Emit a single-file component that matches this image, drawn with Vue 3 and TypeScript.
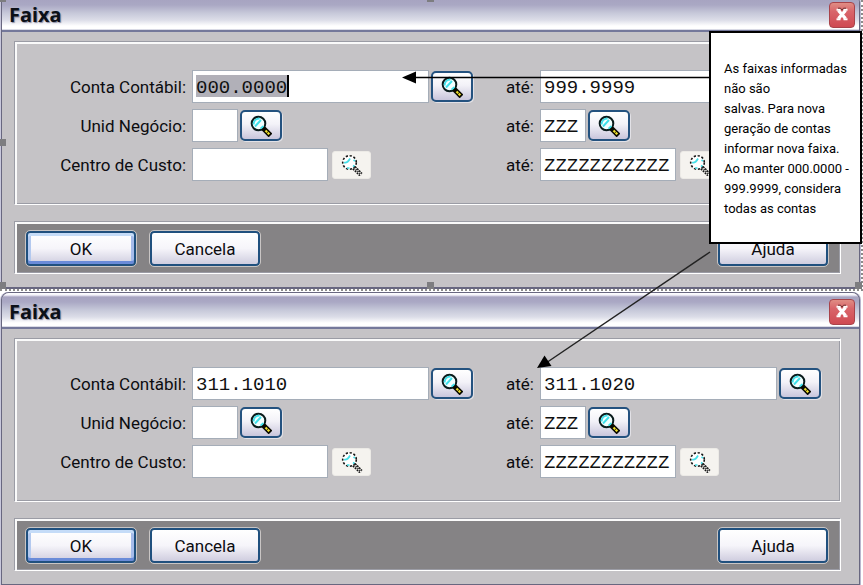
<script setup lang="ts">
import { reactive } from 'vue'

type Size = 'large' | 'small' | 'medium'

interface RangeRow {
  key: string
  label: string
  size: Size
  locked: boolean
  from: string
  to: string
  selected?: boolean
}

interface RangeDialog {
  id: string
  rows: RangeRow[]
}

function buildRows(from: string, to: string, selected: boolean): RangeRow[] {
  return [
    { key: 'conta', label: 'Conta Contábil:', size: 'large', locked: false, from, to, selected },
    { key: 'unid', label: 'Unid Negócio:', size: 'small', locked: false, from: '', to: 'ZZZ' },
    { key: 'centro', label: 'Centro de Custo:', size: 'medium', locked: true, from: '', to: 'ZZZZZZZZZZZ' },
  ]
}

const dialogs = reactive<RangeDialog[]>([
  { id: 'padrao', rows: buildRows('000.0000', '999.9999', true) },
  { id: 'nova', rows: buildRows('311.1010', '311.1020', false) },
])
</script>

<template>
  <main class="page">
    <svg class="symbols" width="0" height="0" aria-hidden="true">
      <symbol id="lens" viewBox="0 0 22 22">
        <circle cx="8.500" cy="8.500" r="6.800" fill="#f2ffff" stroke="#0a1c1c" stroke-width="2" />
        <path d="M3.600 9.500c0-3.500 2.500-6 6-6M5 11.500l6-6.500M10.500 13.300c1.500-.4 2.300-1.200 2.800-2.300" fill="none" stroke="#3fe0ea" stroke-width="1.900" />
        <path d="M13 13l7.500 7.500" stroke="#0a0a00" stroke-width="5.200" />
        <path d="M15.500 15.500l4 4" stroke="#efdf2c" stroke-width="2.200" stroke-dasharray="2.400 0.600" />
      </symbol>
      <symbol id="lens-off" viewBox="0 0 22 22">
        <circle cx="8.500" cy="8.500" r="6.800" fill="#fff" stroke="#161616" stroke-width="1.600" stroke-dasharray="2.200 1.800" />
        <path d="M3 8.500c2 .5 4.500-1 6-4M12.500 6l1.500 1M6 14h2.500M12 11.500l1.500 1" fill="none" stroke="#45dfe8" stroke-width="1.700" />
        <path d="M14 12.500l7 7M11.800 14.700l7 7" stroke="#161616" stroke-width="1.500" stroke-dasharray="2 .8" />
        <path d="M12.800 13.500l7.500 7.500" stroke="#2a2a2a" stroke-width="1.800" stroke-dasharray="1.300 1.300" />
      </symbol>
    </svg>

    <section v-for="dialog in dialogs" :key="dialog.id" class="dialog">
      <header class="titlebar">
        <h2 class="title">Faixa</h2>
        <button type="button" class="close" aria-label="Fechar">
          <svg viewBox="0 0 16 16" width="16" height="16" aria-hidden="true">
            <path d="M4.500 3.500l7 8M11.500 3.500l-7 8" stroke="#fff" stroke-width="3.400" />
            <path d="M2.500 2.800h4M9.500 2.800h4M2.500 12.200h4M9.500 12.200h4" stroke="#fff" stroke-width="2" />
            <path d="M4 1.200h2.500L8 3.200l1.500-2H12" fill="none" stroke="#6d3130" stroke-width="1" />
          </svg>
        </button>
      </header>

      <div class="body">
        <form class="group" @submit.prevent>
          <template v-for="row in dialog.rows" :key="row.key">
            <label class="label" :for="`${dialog.id}-${row.key}-de`">{{ row.label }}</label>
            <div class="cell">
              <input
                :id="`${dialog.id}-${row.key}-de`"
                v-model="row.from"
                type="text"
                class="field"
                :class="[row.size, { selected: row.selected }]"
              />
              <button type="button" class="lookup" :disabled="row.locked" aria-label="Pesquisar">
                <svg width="22" height="22" aria-hidden="true">
                  <use :href="row.locked ? '#lens-off' : '#lens'" />
                </svg>
              </button>
            </div>
            <label class="label" :for="`${dialog.id}-${row.key}-ate`">até:</label>
            <div class="cell">
              <input
                :id="`${dialog.id}-${row.key}-ate`"
                v-model="row.to"
                type="text"
                class="field"
                :class="row.size"
              />
              <button type="button" class="lookup" :disabled="row.locked" aria-label="Pesquisar">
                <svg width="22" height="22" aria-hidden="true">
                  <use :href="row.locked ? '#lens-off' : '#lens'" />
                </svg>
              </button>
            </div>
          </template>
        </form>

        <footer class="actions">
          <button type="button" class="action primary">OK</button>
          <button type="button" class="action">Cancela</button>
          <button type="button" class="action help">Ajuda</button>
        </footer>
      </div>
    </section>

    <!-- Selection frame round the first dialog -->
    <div class="frame" aria-hidden="true">
      <i class="handle top left"></i>
      <i class="handle top center"></i>
      <i class="handle middle left"></i>
      <i class="handle bottom left"></i>
      <i class="handle bottom center"></i>
      <i class="handle bottom right"></i>
    </div>

    <svg class="arrows" viewBox="0 0 320 310" width="320" height="310" aria-hidden="true">
      <path d="M12 17.500H310" stroke="#000" stroke-width="1.500" />
      <path d="M0 17.500L14 11.500V23.500Z" />
      <path d="M308 192L144 303" stroke="#222" stroke-width="1.500" />
      <path d="M135 308L142.500 295.500L149.500 306Z" />
    </svg>

    <aside class="note">
      As faixas informadas não são<br />
      salvas. Para nova geração de contas informar nova faixa. Ao manter 000.0000 - 999.9999, considera
      todas as contas
    </aside>
  </main>
</template>

<style>
body {
  margin: 0;
  background: #fff;
}
</style>

<style scoped>
.page {
  position: relative;
  display: flex;
  flex-direction: column;
  gap: 3px;
  overflow: hidden;
  font-family: Roboto, "Liberation Sans", sans-serif;
  font-size: 17px;
  color: #0c0c10;
}

.symbols {
  position: absolute;
}

.dialog {
  box-sizing: border-box;
  margin: 0 3px 0 1px;
  border: 1px solid #686780;
  border-bottom-width: 2px;
  border-radius: 8px 8px 0 0;
  background: #c5c3c6;
  box-shadow: -1px 0 #c9c8dc, 1px 0 #b9b7cf;
}

.symbols + .dialog {
  margin-top: -5px;
}

.titlebar {
  box-sizing: border-box;
  display: flex;
  align-items: center;
  justify-content: space-between;
  height: 36px;
  padding: 3px 4px 0 7px;
  border-bottom: 2px solid #74789a;
  border-radius: 7px 7px 0 0;
  background: linear-gradient(#fff 0, #f4f3fa 2px, #a7a4c1 4px, #aaa8c4 9px, #c6c8d9 17px, #dcdde8 24px, #fff 30px, #fff 33px, #b4b6cc 34px);
}

.title {
  margin: 0;
  font: bold 20px/28px "Noto Sans", sans-serif;
  color: #0c1018;
  text-shadow: 1px 1px 1px #8f8fa4;
}

.close {
  display: grid;
  place-items: center;
  width: 26px;
  height: 26px;
  padding: 0;
  border: 1px solid #a8434a;
  border-radius: 4px;
  background: linear-gradient(#e08d84, #d9656a 35%, #cf4a52);
}

.body {
  display: flex;
  flex-direction: column;
  gap: 16px;
  padding: 9px 18px 13px 12px;
}

.group,
.actions {
  border: 1px solid #fff;
  border-top-color: #9b9ca5;
  border-left-color: #9b9ca5;
  box-shadow: inset 2px 2px #fafafa, inset -1px -1px #9b9ca5;
}

.group {
  display: grid;
  grid-template-columns: 171px 1fr 36px 1fr;
  column-gap: 6px;
  row-gap: 6px;
  align-items: center;
  margin: 0;
  padding: 28px 0 23px;
}

.label {
  line-height: 32px;
  text-align: right;
  white-space: nowrap;
}

.cell {
  display: flex;
  align-items: center;
  gap: 2px;
}

.field {
  box-sizing: border-box;
  height: 33px;
  padding: 2px 3px 0;
  border: 1px solid #a5adb8;
  border-radius: 0;
  background: #fff;
  font: 19px/24px "Liberation Mono", monospace;
  color: #101010;
}

.field.large {
  width: 237px;
}

.field.small {
  width: 46px;
}

.field.medium {
  width: 136px;
}

.field.selected {
  background:
    linear-gradient(#000, #000) calc(8ch + 3px) 4px / 2px 22px no-repeat,
    linear-gradient(#b1b0b8, #b1b0b8) 3px 4px / 8ch 22px no-repeat,
    #fff;
}

.lookup {
  display: grid;
  flex: none;
  place-items: center;
  width: 42px;
  height: 31px;
  padding: 0;
  border: 2px solid #24527f;
  border-radius: 5px;
  background: linear-gradient(#fff, #f3f2f8 45%, #c9c6dc);
  box-shadow: 1px 1px #e2e1e6;
}

.lookup:disabled {
  width: 39px;
  height: 28px;
  margin-left: 2px;
  border: 1px solid #eceae6;
  border-radius: 3px;
  background: #f5f3ef;
  box-shadow: none;
}

.actions {
  display: flex;
  gap: 14px;
  align-items: center;
  padding: 9px 12px 7px 11px;
  background: #858385;
}

.action {
  width: 110px;
  height: 35px;
  padding: 0;
  border: 2px solid #20507e;
  border-radius: 4px;
  background: linear-gradient(#fff, #f6f5fa 50%, #cfcddf);
  outline: 1px solid #c9c5c4;
  font: inherit;
  color: inherit;
}

.action.primary {
  box-shadow: inset 0 3px #c5dcf8, inset 0 -3px #6a8bd8, inset 3px 0 #b3c9ef, inset -3px 0 #a5bbea;
}

.action.help {
  margin-left: auto;
}

.frame {
  position: absolute;
  top: 0;
  right: 0;
  left: 0;
  height: 289px;
  border-right: 2px dotted #8b8b8b;
  border-bottom: 2px dotted #8b8b8b;
  pointer-events: none;
}

.handle {
  position: absolute;
  width: 7px;
  height: 7px;
  background: #7d7d80;
}

.handle.top {
  top: -5px;
}

.handle.middle {
  top: 139px;
}

.handle.bottom {
  bottom: 0;
}

.handle.left {
  left: -1px;
}

.handle.center {
  left: calc(50% - 4px);
}

.handle.right {
  right: -1px;
}

.arrows {
  position: absolute;
  top: 60px;
  right: 141px;
  pointer-events: none;
}

.note {
  position: absolute;
  top: 31px;
  right: 1px;
  box-sizing: border-box;
  width: 153px;
  padding: 26px 8px 23px 13px;
  border: 2px solid #000;
  background: #fff;
  font: 13px/20px Roboto, "Liberation Sans", sans-serif;
  color: #000;
}
</style>
